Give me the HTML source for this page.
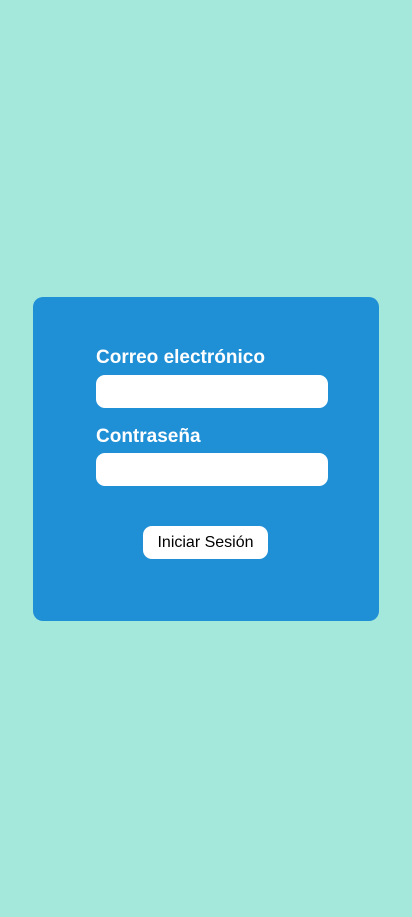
<!DOCTYPE html>
<html><head><meta charset="utf-8"><style>
html,body{margin:0;padding:0;width:412px;height:917px;background:#a4e8dc;overflow:hidden;font-family:"Liberation Sans",sans-serif}
.card{position:absolute;left:33px;top:297px;width:346px;height:324px;background:#1f8fd6;border-radius:10px}
.lbl{position:absolute;left:96px;color:#fff;font-weight:bold;font-size:19px;line-height:20px;white-space:nowrap}
.inp{position:absolute;left:96px;width:232px;height:33px;background:#fff;border-radius:9px}
.btn{position:absolute;left:143px;top:526px;width:125px;height:33px;background:#fff;border-radius:9px;font-size:16px;line-height:33px;text-align:center;color:#000}
</style></head><body>
<div class="card"></div>
<div class="lbl" style="top:348px">Correo electrónico</div>
<div class="inp" style="top:375px"></div>
<div class="lbl" style="top:427px">Contraseña</div>
<div class="inp" style="top:453px"></div>
<div class="btn">Iniciar Sesión</div>
</body></html>
